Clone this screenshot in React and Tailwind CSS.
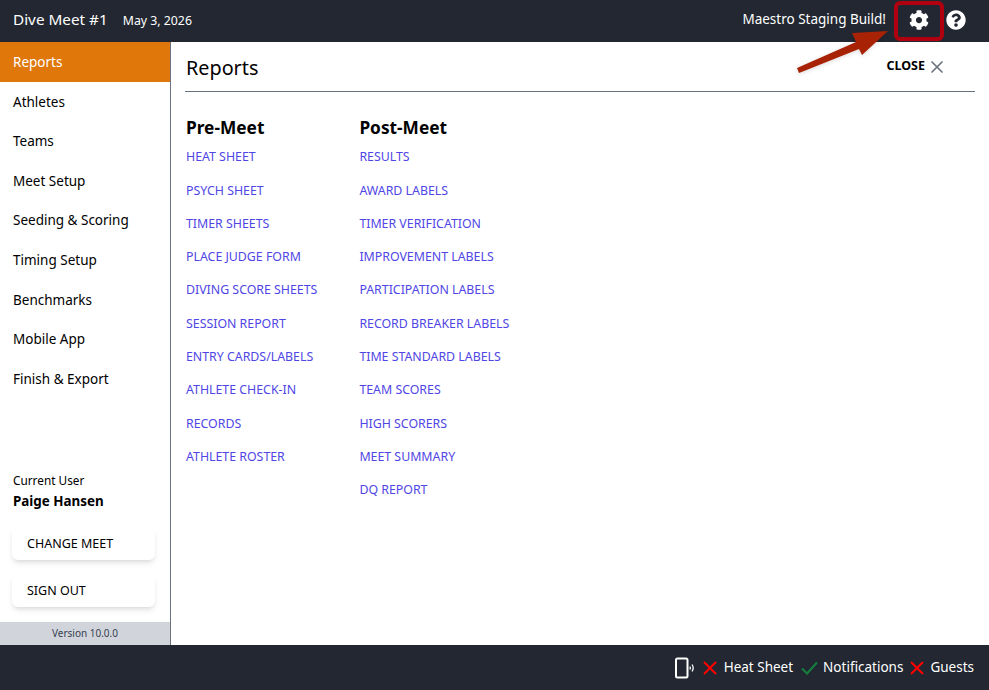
import React from 'react';
import { X } from 'lucide-react';
import { FaCog, FaQuestionCircle } from 'react-icons/fa';

const navItems = ['Reports', 'Athletes', 'Teams', 'Meet Setup', 'Seeding & Scoring', 'Timing Setup', 'Benchmarks', 'Mobile App', 'Finish & Export'];

const preMeet = ['HEAT SHEET', 'PSYCH SHEET', 'TIMER SHEETS', 'PLACE JUDGE FORM', 'DIVING SCORE SHEETS', 'SESSION REPORT', 'ENTRY CARDS/LABELS', 'ATHLETE CHECK-IN', 'RECORDS', 'ATHLETE ROSTER'];

const postMeet = ['RESULTS', 'AWARD LABELS', 'TIMER VERIFICATION', 'IMPROVEMENT LABELS', 'PARTICIPATION LABELS', 'RECORD BREAKER LABELS', 'TIME STANDARD LABELS', 'TEAM SCORES', 'HIGH SCORERS', 'MEET SUMMARY', 'DQ REPORT'];

const ReportColumn = ({ title, links }) => (
    <div>
        <h2 className="text-[17.3px] leading-[24px] font-bold text-black">{title}</h2>
        <ul className="mt-[6.3px]">
            {links.map((link) => (
                <li key={link} className="h-[33.3px] text-[12.35px] leading-[22px] text-[#4f46e5] whitespace-nowrap">{link}</li>
            ))}
        </ul>
    </div>
);

const RedX = ({ className }) => (
    <svg width="16" height="16" viewBox="0 0 16 16" className={className} fill="none" stroke="#f00" strokeWidth="2">
        <path d="M2 2 L14 14 M14 2 L2 14" />
    </svg>
);

const App = () => {
    return (
        <div className="relative flex flex-col h-[690px] w-[989px] overflow-hidden bg-white font-['Noto_Sans',sans-serif] text-black">
            {/* Top bar */}
            <header className="flex items-center justify-between h-[42px] shrink-0 bg-[#222731] text-white pl-[13px] pr-[23px] pb-[3px]">
                <div className="flex items-center gap-[15px]">
                    <span className="text-[15.3px]">Dive Meet #1</span>
                    <span className="text-[12.3px] mt-[3px]">May 3, 2026</span>
                </div>
                <div className="flex items-center">
                    <span className="text-[13.5px] mr-[23px]">Maestro Staging Build!</span>
                    <FaCog size={20} className="mr-[17px]" />
                    <FaQuestionCircle size={20} />
                </div>
            </header>

            <div className="flex flex-1 min-h-0">
                {/* Sidebar */}
                <aside className="flex flex-col w-[171px] shrink-0 border-r border-[#6b7280]">
                    <nav>
                        {navItems.map((item, i) => (
                            <div key={item} className={`flex items-center pl-[13px] text-[13.5px] ${i === 0 ? 'bg-[#e0770b] text-white h-[40px]' : 'text-black h-[39.6px]'}`}>
                                {item}
                            </div>
                        ))}
                    </nav>
                    <div className="mt-auto">
                        <div className="pl-[13px] text-[11.8px] leading-[18px]">Current User</div>
                        <div className="pl-[13px] mt-[2px] text-[13.4px] leading-[20px] font-bold">Paige Hansen</div>
                        <div className="flex flex-col gap-[15px] mt-[17px] pl-[12px] pr-[15px] mb-[15px]">
                            <button className="h-[32px] rounded-md bg-white text-left pl-[15px] text-[12.5px] shadow-md">CHANGE MEET</button>
                            <button className="h-[32px] rounded-md bg-white text-left pl-[15px] text-[12.5px] shadow-md">SIGN OUT</button>
                        </div>
                        <div className="h-[23px] bg-[#d1d5db] text-center text-[10px] leading-[22px] text-[#374151]">Version 10.0.0</div>
                    </div>
                </aside>

                {/* Main panel */}
                <main className="flex-1 min-w-0 pl-[15px] pr-[14px]">
                    <div className="flex items-start justify-between h-[50px] border-b border-[#6b7280] -ml-[1px] pl-[1px]">
                        <h1 className="text-[19.8px] leading-[28px] mt-[12px]">Reports</h1>
                        <div className="flex items-center mt-[13px] mr-[28px]">
                            <span className="text-[12.5px] font-bold">CLOSE</span>
                            <X size={20} strokeWidth={2} className="text-[#6b7280] ml-[2px] mt-[2px]" />
                        </div>
                    </div>
                    <div className="flex gap-[42px] mt-[24px]">
                        <ReportColumn title="Pre-Meet" links={preMeet} />
                        <ReportColumn title="Post-Meet" links={postMeet} />
                    </div>
                </main>
            </div>

            {/* Status bar */}
            <footer className="flex items-center justify-end h-[45px] shrink-0 bg-[#222731] text-white pr-[15px] text-[13.5px]">
                <svg width="20" height="22" viewBox="0 0 20 22" className="mr-[7px]" fill="none" stroke="#fff">
                    <rect x="1" y="1.5" width="11.5" height="19" rx="1.5" strokeWidth="2" />
                    <path d="M14.8 9.5c.7 1 .7 2 0 3M17 7.5c1.5 2.2 1.5 4.8 0 7" strokeWidth="1.3" />
                </svg>
                <RedX className="mr-[6px]" />
                <span className="mr-[8px]">Heat Sheet</span>
                <svg width="17" height="14" viewBox="0 0 17 14" className="mr-[5px]" fill="none" stroke="#15803d" strokeWidth="2">
                    <path d="M1 7.5 L6 12.5 L16 1.5" />
                </svg>
                <span className="mr-[6px]">Notifications</span>
                <RedX className="mr-[5px]" />
                <span>Guests</span>
            </footer>

            {/* Annotation added over the screenshot */}
            <div className="absolute left-[894px] top-[1px] w-[50px] h-[40px] rounded-[6px] border-[4px] border-[#b00010]" />
            <svg className="absolute left-[790px] top-[25px] drop-shadow-sm" width="110" height="50" viewBox="0 0 110 50">
                <path d="M98 6 L62 8 L66 17 L7 43 L9 48 L69 24 L72 30 Z" fill="#a82205" />
            </svg>
        </div>
    );
};

export default App;
